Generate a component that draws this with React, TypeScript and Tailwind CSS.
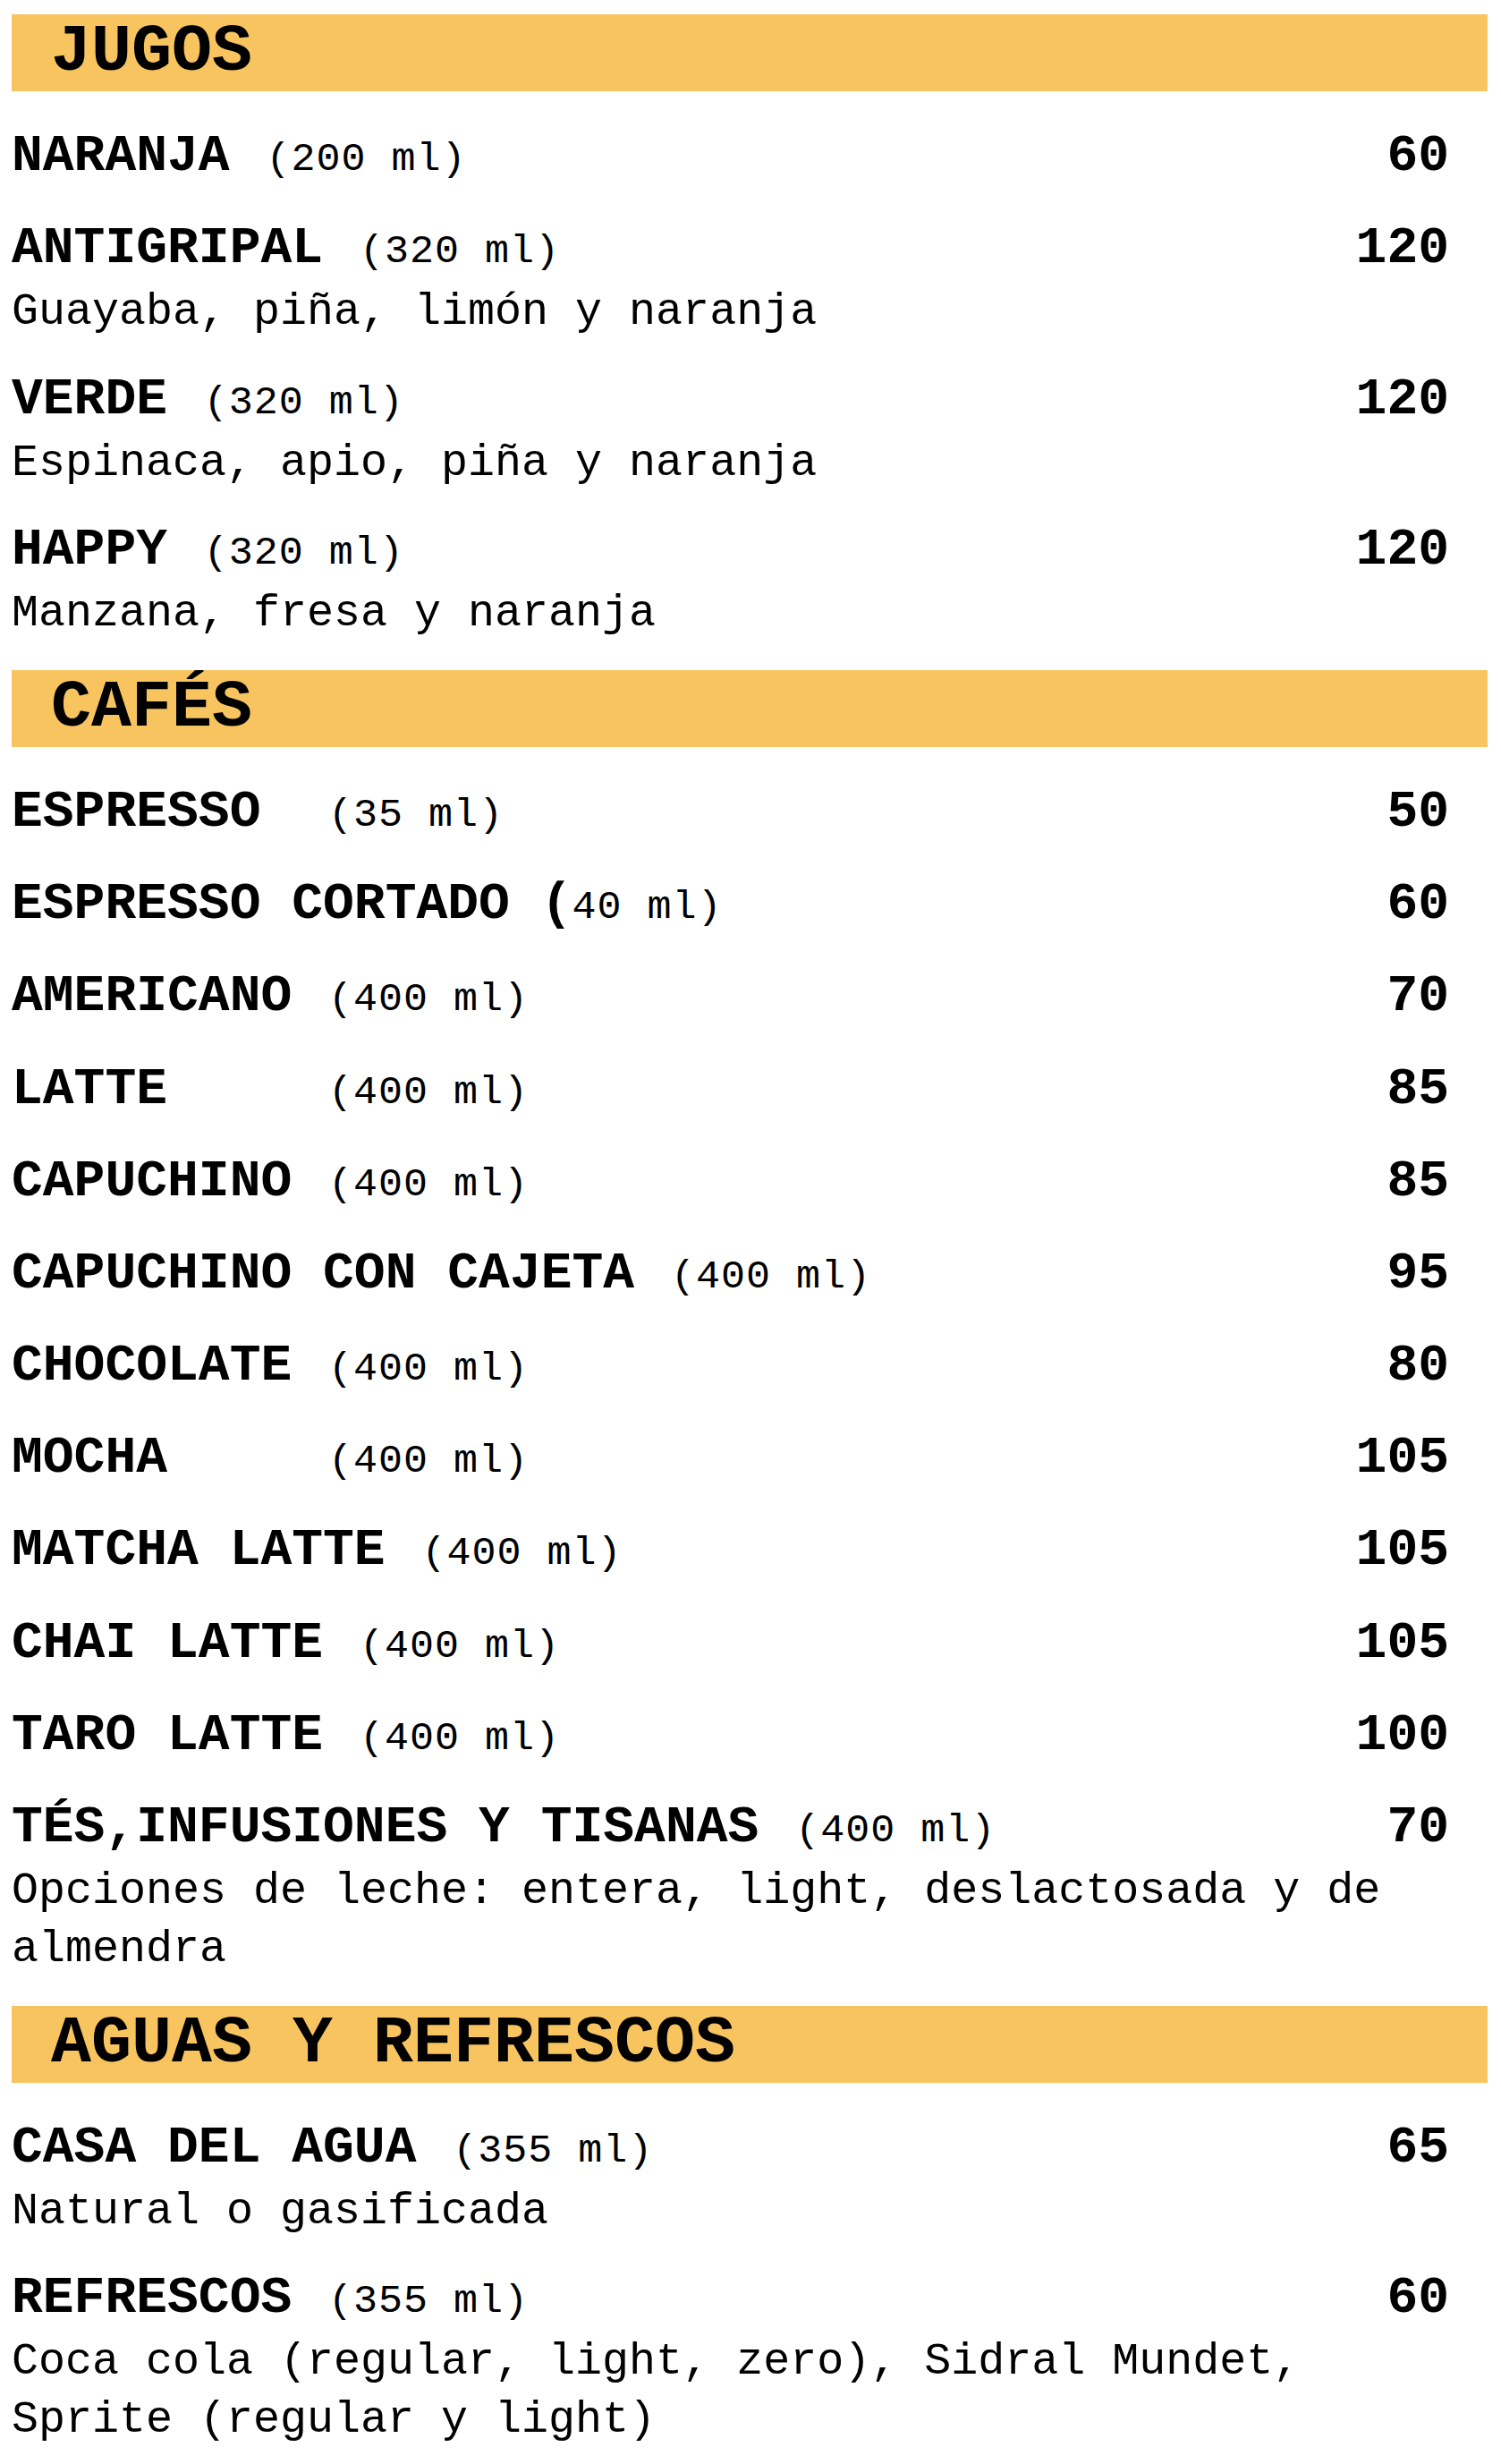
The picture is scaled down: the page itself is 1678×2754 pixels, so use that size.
const mono = { fontFamily: "'Liberation Mono', 'Courier New', monospace" };

type Item = {
  name: string;
  size?: string;
  price: string;
  desc?: string;
};

type Section = {
  title: string;
  items: Item[];
};

const menu: Section[] = [
  {
    title: 'JUGOS',
    items: [
      { name: 'NARANJA', size: '(200 ml)', price: '60' },
      { name: 'ANTIGRIPAL', size: '(320 ml)', price: '120', desc: 'Guayaba, piña, limón y naranja' },
      { name: 'VERDE', size: '(320 ml)', price: '120', desc: 'Espinaca, apio, piña y naranja' },
      { name: 'HAPPY', size: '(320 ml)', price: '120', desc: 'Manzana, fresa y naranja' },
    ],
  },
  {
    title: 'CAFÉS',
    items: [
      { name: 'ESPRESSO ', size: '(35 ml)', price: '50' },
      { name: 'ESPRESSO CORTADO (', size: '40 ml)', price: '60' },
      { name: 'AMERICANO', size: '(400 ml)', price: '70' },
      { name: 'LATTE    ', size: '(400 ml)', price: '85' },
      { name: 'CAPUCHINO', size: '(400 ml)', price: '85' },
      { name: 'CAPUCHINO CON CAJETA', size: '(400 ml)', price: '95' },
      { name: 'CHOCOLATE', size: '(400 ml)', price: '80' },
      { name: 'MOCHA    ', size: '(400 ml)', price: '105' },
      { name: 'MATCHA LATTE', size: '(400 ml)', price: '105' },
      { name: 'CHAI LATTE', size: '(400 ml)', price: '105' },
      { name: 'TARO LATTE', size: '(400 ml)', price: '100' },
      {
        name: 'TÉS,INFUSIONES Y TISANAS',
        size: '(400 ml)',
        price: '70',
        desc: 'Opciones de leche: entera, light, deslactosada y de almendra',
      },
    ],
  },
  {
    title: 'AGUAS Y REFRESCOS',
    items: [
      { name: 'CASA DEL AGUA', size: '(355 ml)', price: '65', desc: 'Natural o gasificada' },
      {
        name: 'REFRESCOS',
        size: '(355 ml)',
        price: '60',
        desc: 'Coca cola (regular, light, zero), Sidral Mundet, Sprite (regular y light)',
      },
    ],
  },
];

function MenuItem({ item }: { item: Item }) {
  // "ESPRESSO CORTADO (" keeps its bold paren glued to the size
  const joined = item.name.endsWith('(');
  return (
    <div className="pt-[26.2px]">
      <div className="flex items-baseline justify-between w-[1607px] h-[77px] leading-[77px]">
        <div className="whitespace-pre">
          <span className="text-[58px] font-bold text-black">{item.name}</span>
          {!joined && <span className="text-[58px] font-bold"> </span>}
          {item.size && (
            <span
              className={
                joined
                  ? 'text-[45px] tracking-[1px] text-black'
                  : 'ml-[6px] text-[45px] tracking-[1px] text-black'
              }
            >
              {item.size}
            </span>
          )}
        </div>
        <span className="text-[58px] font-bold text-black">{item.price}</span>
      </div>
      {item.desc && (
        <p className="w-[1607px] text-[50px] leading-[65px] text-black">{item.desc}</p>
      )}
    </div>
  );
}

function MenuSection({ section }: { section: Section }) {
  return (
    <section className="pb-[31px]">
      <h2 className="h-[86px] w-[1650px] bg-[#f8c460] pl-[44px] text-[75px] leading-[86px] font-bold text-black">
        {section.title}
      </h2>
      <div className="pt-[8px]">
        {section.items.map((item) => (
          <MenuItem key={item.name} item={item} />
        ))}
      </div>
    </section>
  );
}

export default function App() {
  return (
    <div className="min-h-[2754px] w-[1678px] bg-white pt-[16px] pl-[13px]" style={mono}>
      {menu.map((s) => (
        <MenuSection key={s.title} section={s} />
      ))}
    </div>
  );
}
